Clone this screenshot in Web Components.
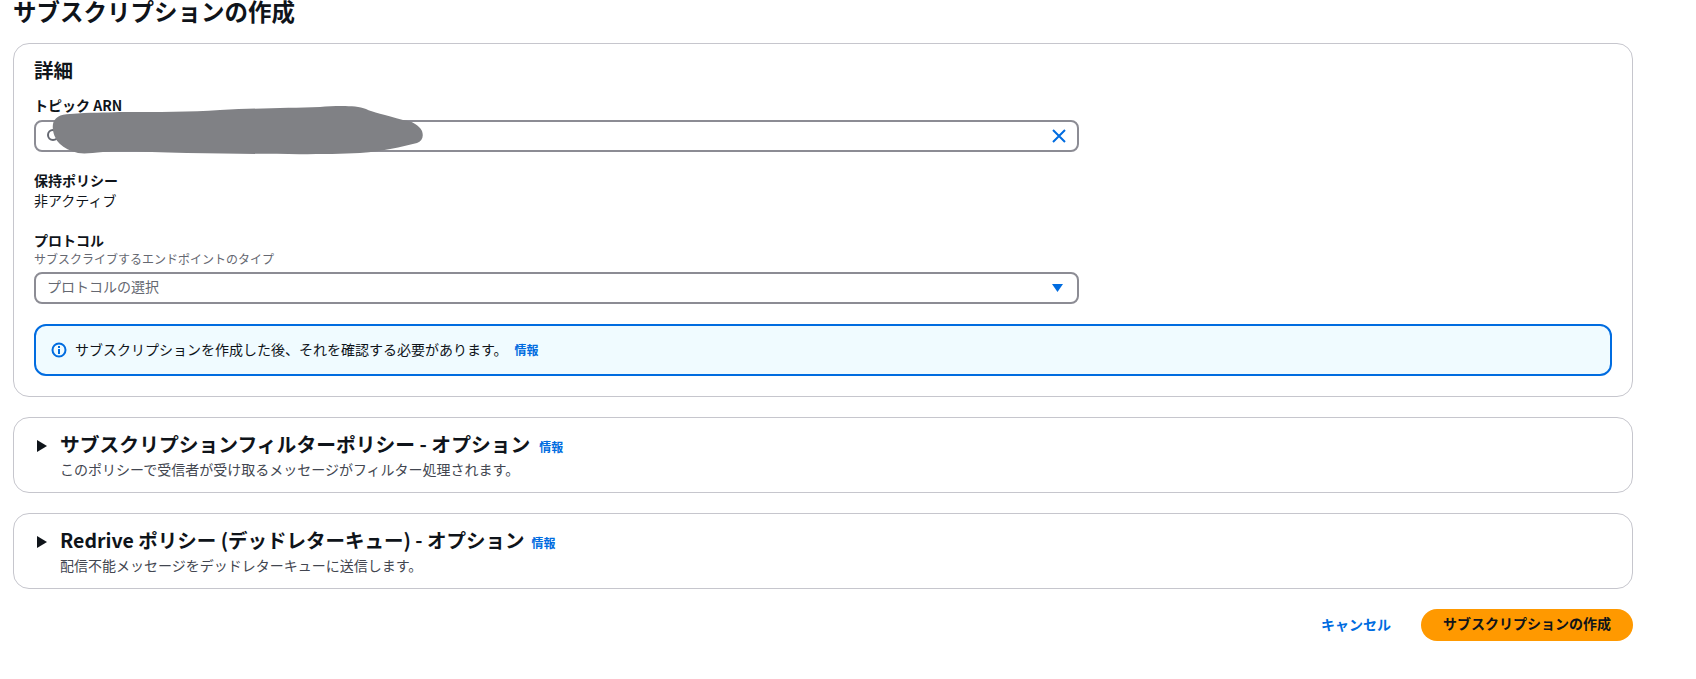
<!DOCTYPE html>
<html lang="ja">
<head>
<meta charset="utf-8">
<title>サブスクリプションの作成</title>
<style>
    html, body { margin: 0; background: #fff; }
    body {
        font-family: "Noto Sans CJK JP", "Noto Sans", "Liberation Sans", sans-serif;
        color: #0f141a;
        font-size: 14px;
    }
    h1 {
        margin: 0;
        font-size: 23.5px;
        line-height: 22px;
        font-weight: 700;
    }
</style>
</head>
<body>
<subscription-page>
    <h1 slot="title">サブスクリプションの作成</h1>

    <form-card heading="詳細">
        <form-field label="トピック ARN">
            <topic-input></topic-input>
        </form-field>
        <form-field label="保持ポリシー" style="margin-top:20px">
            <div style="margin-top:-4px;line-height:18px">非アクティブ</div>
        </form-field>
        <form-field label="プロトコル" description="サブスクライブするエンドポイントのタイプ" style="margin-top:23px">
            <protocol-select placeholder="プロトコルの選択"></protocol-select>
        </form-field>
        <info-alert>サブスクリプションを作成した後、それを確認する必要があります。</info-alert>
    </form-card>

    <expand-section heading="サブスクリプションフィルターポリシー - オプション" description="このポリシーで受信者が受け取るメッセージがフィルター処理されます。" style="--heading-size:19.8px"></expand-section>
    <expand-section heading="Redrive ポリシー (デッドレターキュー) - オプション" description="配信不能メッセージをデッドレターキューに送信します。" style="--heading-size:19.5px;--info-gap:7px;margin-top:20px"></expand-section>

    <form-actions cancel="キャンセル" submit="サブスクリプションの作成"></form-actions>
</subscription-page>

<script>
class SubscriptionPage extends HTMLElement {
    constructor() {
        super();
        this.attachShadow({mode: 'open'});
        this.shadowRoot.innerHTML = `
        <style>
            :host { display: block; width: 1620px; padding-left: 13px; }
            .title { height: 43px; }
            .sections { display: flex; flex-direction: column; }
        </style>
        <div class="title"><slot name="title"></slot></div>
        <div class="sections"><slot></slot></div>`;
    }
}
customElements.define('subscription-page', SubscriptionPage);

class FormCard extends HTMLElement {
    constructor() {
        super();
        this.attachShadow({mode: 'open'});
        this.shadowRoot.innerHTML = `
        <style>
            :host {
                display: block;
                box-sizing: border-box;
                height: 354px;
                margin-bottom: 20px;
                padding: 13px 20px 20px 20px;
                border: 1px solid #c6c6cd;
                border-radius: 16px;
            }
            h2 {
                margin: 0 0 15px;
                font-size: 19.5px;
                line-height: 25px;
                font-weight: 700;
            }
        </style>
        <h2></h2>
        <slot></slot>`;
    }

    connectedCallback() {
        this.shadowRoot.querySelector('h2').textContent = this.getAttribute('heading');
    }
}
customElements.define('form-card', FormCard);

class FormField extends HTMLElement {
    constructor() {
        super();
        this.attachShadow({mode: 'open'});
        this.shadowRoot.innerHTML = `
        <style>
            :host { display: block; }
            .label { margin-top: -1px; font-size: 14px; line-height: 18px; font-weight: 700; }
            .description { margin: 2px 0 -1px; font-size: 12px; line-height: 16px; color: #656871; }
            .control { margin-top: 6px; }
        </style>
        <div class="label"></div>
        <div class="description"></div>
        <div class="control"><slot></slot></div>`;
    }

    connectedCallback() {
        this.shadowRoot.querySelector('.label').textContent = this.getAttribute('label');
        const description = this.shadowRoot.querySelector('.description');
        if(this.hasAttribute('description')) {
            description.textContent = this.getAttribute('description');
        }
        else {
            description.remove();
        }
    }
}
customElements.define('form-field', FormField);

class TopicInput extends HTMLElement {
    constructor() {
        super();
        this.attachShadow({mode: 'open'});
        this.shadowRoot.innerHTML = `
        <style>
            :host { display: block; position: relative; }
            .box {
                box-sizing: border-box;
                width: 1045px;
                height: 32px;
                padding: 0 10px;
                display: flex;
                align-items: center;
                justify-content: space-between;
                border: 2px solid #8c8c94;
                border-radius: 8px;
            }
            svg { display: block; }
            /* the blacked out ARN lies over the field */
            .redacted { position: absolute; left: 16px; top: -16px; }
        </style>
        <div class="box">
            <svg width="16" height="16" viewBox="0 0 16 16" fill="none" stroke="#656871" stroke-width="2">
                <circle cx="7" cy="7" r="5"></circle>
                <path d="M11 11l4 4"></path>
            </svg>
            <svg width="16" height="16" viewBox="0 0 16 16" fill="none" stroke="#006ce0" stroke-width="2">
                <path d="M2 2l12 12M14 2L2 14"></path>
            </svg>
        </div>
        <svg class="redacted" width="376" height="52" viewBox="50 104 376 52">
            <path fill="#808185" d="M53 124 C54 118 60 114 70 114 C90 112 105 113 120 112 C160 112 190 112 220 110 C260 108 290 108 320 107 C335 106 355 105 366 109 C372 112 385 115 403 120 C412 121 419 125 422 131 C424 137 422 141 417 143 C400 147 385 151 360 153 C320 155 260 154 187 153 C150 152 125 151 103 152 C92 153 85 154 78 153 C70 151 64 148 60 144 C54 138 52 130 53 124 Z"></path>
        </svg>`;
    }
}
customElements.define('topic-input', TopicInput);

class ProtocolSelect extends HTMLElement {
    constructor() {
        super();
        this.attachShadow({mode: 'open'});
        this.shadowRoot.innerHTML = `
        <style>
            :host { display: block; }
            .box {
                box-sizing: border-box;
                width: 1045px;
                height: 32px;
                padding: 0 14px 0 11px;
                display: flex;
                align-items: center;
                justify-content: space-between;
                border: 2px solid #8c8c94;
                border-radius: 8px;
                color: #656871;
                font-size: 14px;
            }
            span { margin-top: -5px; }
            svg { display: block; }
        </style>
        <div class="box">
            <span></span>
            <svg width="11" height="8" viewBox="0 0 11 8"><path fill="#006ce0" d="M0 0h11L5.5 8z"></path></svg>
        </div>`;
    }

    connectedCallback() {
        this.shadowRoot.querySelector('span').textContent = this.getAttribute('placeholder');
    }
}
customElements.define('protocol-select', ProtocolSelect);

class InfoLink extends HTMLElement {
    constructor() {
        super();
        this.attachShadow({mode: 'open'});
        this.shadowRoot.innerHTML = `
        <style>
            :host { display: inline-block; color: #006ce0; font-size: 12px; font-weight: 700; line-height: 16px; }
        </style>
        情報`;
    }
}
customElements.define('info-link', InfoLink);

class InfoAlert extends HTMLElement {
    constructor() {
        super();
        this.attachShadow({mode: 'open'});
        this.shadowRoot.innerHTML = `
        <style>
            :host {
                display: flex;
                align-items: center;
                box-sizing: border-box;
                height: 52px;
                margin-top: 20px;
                padding: 0 15px;
                background: #f0fbff;
                border: 2px solid #006ce0;
                border-radius: 12px;
                font-size: 14px;
            }
            svg { flex: none; margin-right: 8px; }
            span { margin-top: -2px; }
            info-link { margin-left: 7px; }
        </style>
        <svg width="16" height="16" viewBox="0 0 16 16" fill="none" stroke="#006ce0" stroke-width="2">
            <circle cx="8" cy="8" r="6.5"></circle>
            <path d="M8 7v5M8 4v2"></path>
        </svg>
        <span><slot></slot></span>
        <info-link></info-link>`;
    }
}
customElements.define('info-alert', InfoAlert);

class ExpandSection extends HTMLElement {
    constructor() {
        super();
        this.attachShadow({mode: 'open'});
        this.shadowRoot.innerHTML = `
        <style>
            :host {
                display: grid;
                grid-template-columns: 12px 1fr;
                column-gap: 11px;
                box-sizing: border-box;
                height: 76px;
                padding: 13px 19px 10px 23px;
                border: 1px solid #c6c6cd;
                border-radius: 16px;
            }
            svg { margin-top: 9px; display: block; }
            .heading { display: flex; align-items: center; gap: var(--info-gap, 9px); height: 26px; }
            h3 { margin: 0; font-size: var(--heading-size, 19.7px); line-height: 26px; font-weight: 700; }
            info-link { margin-top: 5px; }
            .description { margin-top: 4px; font-size: 14px; line-height: 16px; color: #424650; }
        </style>
        <svg width="10" height="12" viewBox="0 0 10 12"><path fill="#0f141a" d="M0 0l10 6-10 6z"></path></svg>
        <div>
            <div class="heading"><h3></h3><info-link></info-link></div>
            <div class="description"></div>
        </div>`;
    }

    connectedCallback() {
        this.shadowRoot.querySelector('h3').textContent = this.getAttribute('heading');
        this.shadowRoot.querySelector('.description').textContent = this.getAttribute('description');
    }
}
customElements.define('expand-section', ExpandSection);

class FormActions extends HTMLElement {
    constructor() {
        super();
        this.attachShadow({mode: 'open'});
        this.shadowRoot.innerHTML = `
        <style>
            :host {
                display: flex;
                justify-content: flex-end;
                align-items: center;
                gap: 30px;
                margin-top: 20px;
                font-size: 14px;
                font-weight: 700;
            }
            .cancel { color: #006ce0; margin-top: -3px; }
            .submit {
                height: 32px;
                line-height: 29px;
                padding: 0 22px;
                background: #ff9900;
                color: #0f141a;
                border-radius: 16px;
            }
        </style>
        <span class="cancel"></span>
        <span class="submit"></span>`;
    }

    connectedCallback() {
        this.shadowRoot.querySelector('.cancel').textContent = this.getAttribute('cancel');
        this.shadowRoot.querySelector('.submit').textContent = this.getAttribute('submit');
    }
}
customElements.define('form-actions', FormActions);
</script>
</body>
</html>
